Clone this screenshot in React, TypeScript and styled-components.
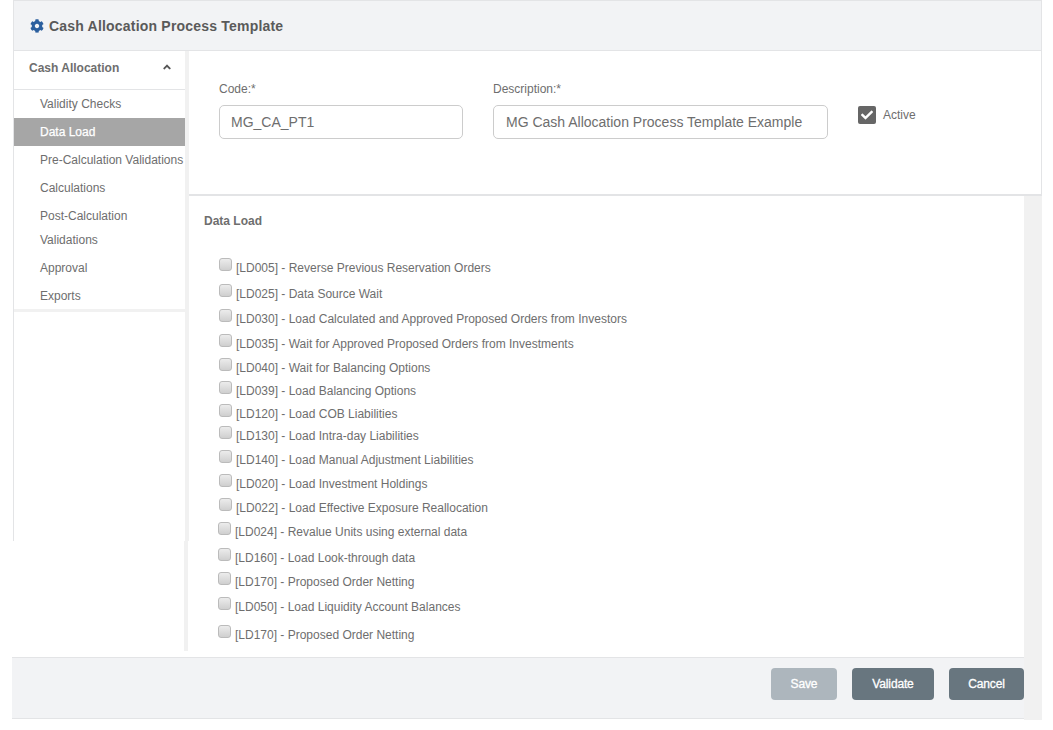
import React from "react";
import styled, { createGlobalStyle } from "styled-components";
import { FaCog, FaCheck, FaAngleUp } from "react-icons/fa";

const Global = createGlobalStyle`
  html, body { margin: 0; padding: 0; background: #fff; }
  body { font-family: "Liberation Sans", Arial, sans-serif; color: #666; }
`;

const Frame = styled.div`
  display: grid;
  width: 1029px;
  margin-left: 13px;
  grid-template-columns: 172px 839px 18px;
  grid-template-rows: 51px 145px 461px 63px;
  grid-template-areas:
    "head head head"
    "side form form"
    "side data track"
    "foot foot track";
`;

const Header = styled.header`
  grid-area: head;
  display: flex;
  align-items: center;
  gap: 5px;
  padding-left: 16px;
  background: #f2f3f5;
  border: 1px solid #e3e4e6;
  color: #5a5a5a;
  font-size: 14px;
  font-weight: bold;
  letter-spacing: 0.2px;
  svg { color: #2b5f9e; width: 14px; height: 14px; }
`;

const SideColumn = styled.aside`
  grid-area: side;
  display: flex;
  flex-direction: column;
  height: 600px;
`;

const SideUpper = styled.div`
  height: 490px;
  border-left: 1px solid #e3e4e6;
  border-right: 4px solid #f1f1f1;
  margin-right: -4px;
`;

const SideLower = styled.div`
  height: 110px;
  border-right: 4px solid #f1f1f1;
  margin-right: -3px;
`;

const MenuHead = styled.div`
  display: flex;
  align-items: center;
  justify-content: space-between;
  box-sizing: border-box;
  height: 39px;
  padding: 0 12px 4px 15px;
  border-bottom: 1px solid #e3e4e6;
  font-size: 12px;
  font-weight: bold;
  color: #6e6e6e;
  svg { width: 12px; height: 12px; color: #555; margin-top: -3px; }
`;

const Menu = styled.ul`
  list-style: none;
  margin: 0;
  padding: 0;
  border-bottom: 3px solid #f1f1f1;
  height: 219px;
`;

const MenuItem = styled.li<{ $active?: boolean }>`
  padding: 2px 0 2px 26px;
  line-height: 24px;
  font-size: 12px;
  white-space: nowrap;
  background: ${(p) => (p.$active ? "#a6a6a6" : "transparent")};
  color: ${(p) => (p.$active ? "#fff" : "#6e6e6e")};
  -webkit-text-stroke: ${(p) => (p.$active ? "0.25px #fff" : "0")};
`;

const FormPanel = styled.section`
  grid-area: form;
  display: flex;
  align-items: flex-start;
  padding: 31px 0 0 30px;
  margin-left: 4px;
  border-right: 1px solid #e3e4e6;
  border-bottom: 2px solid #e3e4e6;
`;

const Field = styled.label<{ $width: number; $gap: number; $pad: number }>`
  display: flex;
  flex-direction: column;
  width: ${(p) => p.$width}px;
  margin-right: ${(p) => p.$gap}px;
  font-size: 12px;
  color: #6e6e6e;
  input { padding-left: ${(p) => p.$pad}px; }
`;

const FieldLabel = styled.span`
  line-height: 14px;
  margin-bottom: 9px;
`;

const TextInput = styled.input`
  box-sizing: border-box;
  height: 34px;
  width: 100%;
  padding: 0 12px;
  border: 1px solid #ccc;
  border-radius: 5px;
  font: 14px "Liberation Sans", Arial, sans-serif;
  color: #6e6e6e;
  background: #fff;
  outline: none;
`;

const ActiveWrap = styled.div`
  display: flex;
  align-items: center;
  gap: 7px;
  margin-top: 24px;
  font-size: 12px;
  color: #6e6e6e;
`;

const ActiveBox = styled.span`
  display: flex;
  align-items: center;
  justify-content: center;
  width: 18px;
  height: 18px;
  border-radius: 2px;
  background: #666;
  color: #fff;
  svg { width: 12px; height: 12px; }
`;

const DataPanel = styled.section`
  grid-area: data;
  margin-left: 4px;
  padding: 0 0 0 15px;
  overflow: hidden;
`;

const DataTitle = styled.h3`
  margin: 0;
  height: 65px;
  padding-top: 18px;
  box-sizing: border-box;
  font-size: 12px;
  line-height: 14px;
  font-weight: bold;
  color: #6e6e6e;
`;

const Row = styled.label<{ $top: number; $left: number }>`
  display: flex;
  align-items: flex-start;
  margin-top: ${(p) => p.$top}px;
  margin-left: ${(p) => p.$left}px;
  font-size: 12px;
  line-height: 14px;
  color: #6e6e6e;
  white-space: nowrap;
`;

const Check = styled.input`
  appearance: none;
  box-sizing: border-box;
  width: 13px;
  height: 13px;
  margin: -3px 4px 0 0;
  border: 1px solid #bbb;
  border-radius: 3px;
  background: linear-gradient(#ececec, #cfcfcf);
  flex: none;
`;

const Track = styled.div`
  grid-area: track;
  background: #f1f1f1;
`;

const Footer = styled.footer`
  grid-area: foot;
  display: flex;
  align-items: flex-start;
  justify-content: flex-end;
  gap: 15px;
  margin-left: -1px;
  padding-top: 10px;
  height: 62px;
  box-sizing: border-box;
  background: #f2f3f5;
  border-top: 1px solid #e3e4e6;
  border-bottom: 1px solid #e3e4e6;
`;

const Button = styled.button<{ $width: number; $muted?: boolean }>`
  width: ${(p) => p.$width}px;
  height: 32px;
  padding: 0;
  border: 0;
  border-radius: 4px;
  background: ${(p) => (p.$muted ? "#adb6bd" : "#68767f")};
  color: #fff;
  font: 12px "Liberation Sans", Arial, sans-serif;
  letter-spacing: -0.15px;
  -webkit-text-stroke: 0.3px #fff;
`;

const menu = ["Validity Checks", "Data Load", "Pre-Calculation Validations", "Calculations", "Post-Calculation Validations", "Approval", "Exports"];

const rows: [string, number, number][] = [
  ["[LD005] - Reverse Previous Reservation Orders", 0, 15],
  ["[LD025] - Data Source Wait", 12, 15],
  ["[LD030] - Load Calculated and Approved Proposed Orders from Investors", 11, 15],
  ["[LD035] - Wait for Approved Proposed Orders from Investments", 11, 15],
  ["[LD040] - Wait for Balancing Options", 10, 15],
  ["[LD039] - Load Balancing Options", 9, 15],
  ["[LD120] - Load COB Liabilities", 9, 15],
  ["[LD130] - Load Intra-day Liabilities", 8, 15],
  ["[LD140] - Load Manual Adjustment Liabilities", 10, 15],
  ["[LD020] - Load Investment Holdings", 10, 15],
  ["[LD022] - Load Effective Exposure Reallocation", 10, 15],
  ["[LD024] - Revalue Units using external data", 10, 14],
  ["[LD160] - Load Look-through data", 12, 14],
  ["[LD170] - Proposed Order Netting", 10, 14],
  ["[LD050] - Load Liquidity Account Balances", 11, 14],
  ["[LD170] - Proposed Order Netting", 14, 14],
];

export default function App() {
  return (
    <>
      <Global />
      <Frame>
        <Header>
          <FaCog />
          Cash Allocation Process Template
        </Header>
        <SideColumn>
          <SideUpper>
            <MenuHead>
              Cash Allocation
              <FaAngleUp />
            </MenuHead>
            <Menu>
              {menu.map((m) => (
                <MenuItem key={m} $active={m === "Data Load"}>
                  {m === "Post-Calculation Validations" ? (
                    <>
                      Post-Calculation
                      <br />
                      Validations
                    </>
                  ) : (
                    m
                  )}
                </MenuItem>
              ))}
            </Menu>
          </SideUpper>
          <SideLower />
        </SideColumn>
        <FormPanel>
          <Field $width={244} $gap={30} $pad={11}>
            <FieldLabel>Code:*</FieldLabel>
            <TextInput defaultValue="MG_CA_PT1" />
          </Field>
          <Field $width={335} $gap={30} $pad={12}>
            <FieldLabel>Description:*</FieldLabel>
            <TextInput defaultValue="MG Cash Allocation Process Template Example" />
          </Field>
          <ActiveWrap>
            <ActiveBox>
              <FaCheck />
            </ActiveBox>
            Active
          </ActiveWrap>
        </FormPanel>
        <DataPanel>
          <DataTitle>Data Load</DataTitle>
          {rows.map(([t, top, left], i) => (
            <Row key={i} $top={top} $left={left}>
              <Check type="checkbox" />
              {t}
            </Row>
          ))}
        </DataPanel>
        <Track />
        <Footer>
          <Button $width={66} $muted>Save</Button>
          <Button $width={82}>Validate</Button>
          <Button $width={75}>Cancel</Button>
        </Footer>
      </Frame>
    </>
  );
}
